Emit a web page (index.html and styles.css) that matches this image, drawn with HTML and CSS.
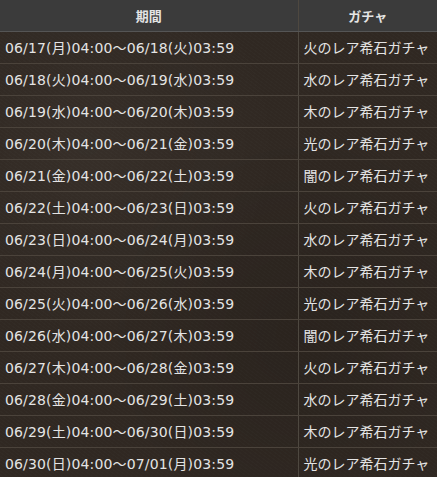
FILE: index.html
```html
<!DOCTYPE html>
<html lang="ja">
<head>
    <meta charset="UTF-8">
    <meta name="viewport" content="width=device-width, initial-scale=1.0">
    <link rel="stylesheet" href="styles.css">
    <title>レア希石ガチャ</title>
</head>
<body>
    <table class="gacha-table">
        <thead>
            <tr>
                <th class="col-term">期間</th>
                <th class="col-gacha">ガチャ</th>
            </tr>
        </thead>
        <tbody>
            <tr><td>06/17(月)04:00～06/18(火)03:59</td><td>火のレア希石ガチャ</td></tr>
            <tr><td>06/18(火)04:00～06/19(水)03:59</td><td>水のレア希石ガチャ</td></tr>
            <tr><td>06/19(水)04:00～06/20(木)03:59</td><td>木のレア希石ガチャ</td></tr>
            <tr><td>06/20(木)04:00～06/21(金)03:59</td><td>光のレア希石ガチャ</td></tr>
            <tr><td>06/21(金)04:00～06/22(土)03:59</td><td>闇のレア希石ガチャ</td></tr>
            <tr><td>06/22(土)04:00～06/23(日)03:59</td><td>火のレア希石ガチャ</td></tr>
            <tr><td>06/23(日)04:00～06/24(月)03:59</td><td>水のレア希石ガチャ</td></tr>
            <tr><td>06/24(月)04:00～06/25(火)03:59</td><td>木のレア希石ガチャ</td></tr>
            <tr><td>06/25(火)04:00～06/26(水)03:59</td><td>光のレア希石ガチャ</td></tr>
            <tr><td>06/26(水)04:00～06/27(木)03:59</td><td>闇のレア希石ガチャ</td></tr>
            <tr><td>06/27(木)04:00～06/28(金)03:59</td><td>火のレア希石ガチャ</td></tr>
            <tr><td>06/28(金)04:00～06/29(土)03:59</td><td>水のレア希石ガチャ</td></tr>
            <tr><td>06/29(土)04:00～06/30(日)03:59</td><td>木のレア希石ガチャ</td></tr>
            <tr><td>06/30(日)04:00～07/01(月)03:59</td><td>光のレア希石ガチャ</td></tr>
        </tbody>
    </table>
</body>
</html>
```

FILE: styles.css
```css
*, body{
    box-sizing: border-box;
    margin: 0;
}
body{
    font-family: "DejaVu Sans", "Noto Sans CJK JP", sans-serif;
    color: #e4e4e4;
    background: #2f2822;
}

.gacha-table{
    width: 437px;
    border-collapse: collapse;
    font-size: 14px;
    background-color: #302822;
    background-image:
        radial-gradient(circle at 20% 30%, rgba(255,255,255,0.03), transparent 40%),
        radial-gradient(circle at 70% 70%, rgba(0,0,0,0.12), transparent 45%),
        repeating-linear-gradient(37deg, rgba(255,255,255,0.012) 0 1px, transparent 1px 3px);
}

.gacha-table th{
    height: 31px;
    background: #3b3b3b;
    font-family: "Noto Sans CJK JP", sans-serif;
    font-weight: bold;
    font-size: 13px;
    text-align: center;
    border-bottom: 1px solid #555;
}
.col-term{
    width: 298px;
}

.gacha-table td{
    height: 32px;
    padding: 0 0 0 5px;
    border-bottom: 1px solid #4b433b;
    white-space: nowrap;
}
.gacha-table td:first-child{
    letter-spacing: 0.15px;
}

.gacha-table th + th,
.gacha-table td + td{
    border-left: 1px solid #4e4840;
}
```
